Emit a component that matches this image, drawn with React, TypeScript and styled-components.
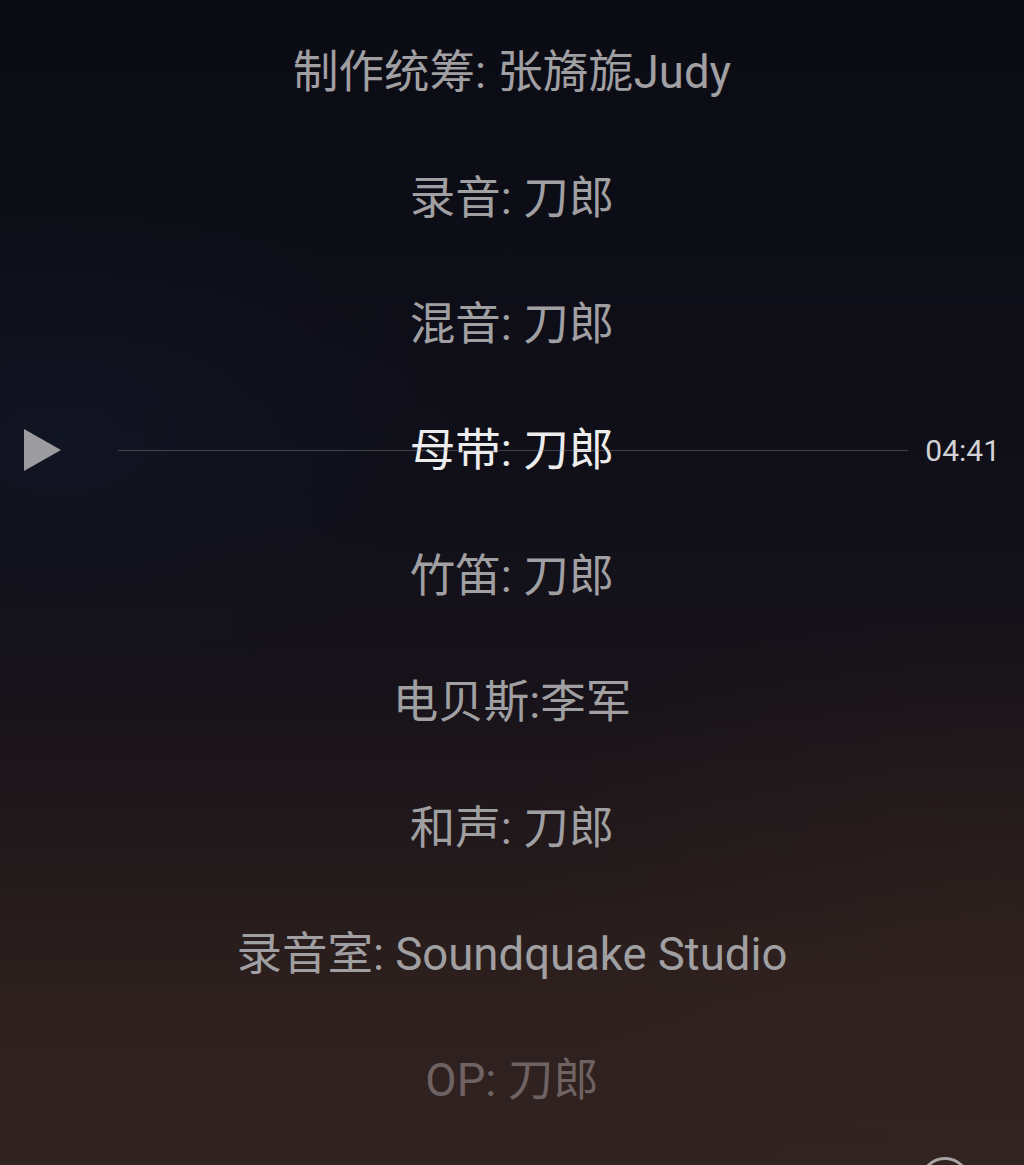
import { FC } from "react";
import styled, { createGlobalStyle } from "styled-components";

const GlobalStyle = createGlobalStyle`
  html, body {
    margin: 0;
    padding: 0;
    background: #0c0c15;
  }
  body {
    font-family: Roboto, "Noto Sans CJK SC", sans-serif;
  }
`;

type Line = {
  text: string;
  tone: "normal" | "active" | "fade";
};

const lines: Line[] = [
  { text: "制作统筹: 张旖旎Judy", tone: "normal" },
  { text: "录音: 刀郎", tone: "normal" },
  { text: "混音: 刀郎", tone: "normal" },
  { text: "母带: 刀郎", tone: "active" },
  { text: "竹笛: 刀郎", tone: "normal" },
  { text: "电贝斯:李军", tone: "normal" },
  { text: "和声: 刀郎", tone: "normal" },
  { text: "录音室: Soundquake Studio", tone: "normal" },
  { text: "OP: 刀郎", tone: "fade" },
];

const toneColor = {
  normal: "#a09fa2",
  active: "#ededed",
  fade: "#6f6262",
};

export const LyricScreen: FC = () => {
  return (
    <>
      <GlobalStyle />
      <Sscreen>
        <Slist>
          {lines.map((l, i) => (
            <Sline key={i} tone={l.tone}>
              {l.text}
            </Sline>
          ))}
        </Slist>
        <Sseek>
          <Splay>
            <svg width="40" height="44" viewBox="0 0 40 44">
              <path d="M1 1 L38 22 L1 43 Z" fill="#9c9c9e" />
            </svg>
          </Splay>
          <Strack />
          <Stime>04:41</Stime>
        </Sseek>
        <Sring />
      </Sscreen>
    </>
  );
};

export default LyricScreen;

const Sscreen = styled.div`
  position: relative;
  width: 1024px;
  height: 1165px;
  overflow: hidden;
  background:
    radial-gradient(ellipse 400px 240px at 60px 440px, rgba(18, 26, 46, 0.45), rgba(18, 26, 46, 0) 100%),
    radial-gradient(ellipse 500px 300px at 1000px 900px, rgba(60, 40, 32, 0.3), rgba(60, 40, 32, 0) 100%),
    linear-gradient(
      180deg,
      #0b0b14 0px,
      #0e0e18 300px,
      #111019 520px,
      #18131a 700px,
      #22191b 860px,
      #2d201e 990px,
      #322321 1165px
    );
`;

const Slist = styled.div`
  display: flex;
  flex-direction: column;
  align-items: center;
  padding-top: 10px;
`;

const Sline = styled.div<{ tone: Line["tone"] }>`
  height: 126px;
  line-height: 126px;
  font-size: 45.5px;
  color: ${(props) => toneColor[props.tone]};
  white-space: pre;
`;

const Sseek = styled.div`
  position: absolute;
  left: 0;
  right: 0;
  top: 428px;
  height: 44px;
  display: flex;
  align-items: center;
  padding: 0 24px 0 23px;
`;

const Splay = styled.div`
  width: 40px;
  height: 44px;
  display: flex;
  svg {
    display: block;
  }
`;

const Strack = styled.div`
  flex: 1;
  height: 1px;
  margin: 0 17px 0 55px;
  background: rgba(160, 160, 170, 0.35);
`;

const Stime = styled.div`
  font-family: Roboto, "Noto Sans", sans-serif;
  font-size: 30px;
  color: #d2d2d4;
`;

const Sring = styled.div`
  position: absolute;
  left: 920px;
  top: 1157px;
  width: 44px;
  height: 44px;
  border-radius: 50%;
  border: 3px solid #a8a2a2;
`;
